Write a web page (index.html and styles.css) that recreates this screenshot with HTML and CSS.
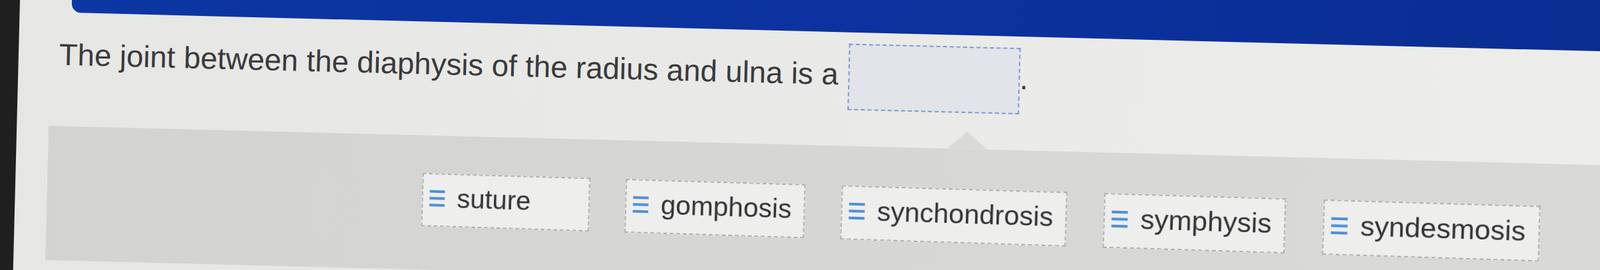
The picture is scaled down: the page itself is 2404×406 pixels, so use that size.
FILE: index.html
```html
<!DOCTYPE html>
<html lang="en">
<head>
    <meta charset="UTF-8">
    <meta name="viewport" content="width=device-width, initial-scale=1.0">
    <title>Drag and Drop Question</title>
    <link rel="stylesheet" href="styles.css">
</head>
<body>
    <div class="screen">
        <div class="topbar"></div>

        <p class="question">The joint between the diaphysis of the radius and ulna is a <span class="drop-zone"></span>.</p>

        <div class="tray">
            <div class="choices">
                <div class="chip">
                    <svg class="grip" viewBox="0 0 24 25"><rect y="0" width="24" height="4"/><rect y="10.5" width="24" height="4"/><rect y="21" width="24" height="4"/></svg>
                    <span>suture</span>
                </div>
                <div class="chip">
                    <svg class="grip" viewBox="0 0 24 25"><rect y="0" width="24" height="4"/><rect y="10.5" width="24" height="4"/><rect y="21" width="24" height="4"/></svg>
                    <span>gomphosis</span>
                </div>
                <div class="chip">
                    <svg class="grip" viewBox="0 0 24 25"><rect y="0" width="24" height="4"/><rect y="10.5" width="24" height="4"/><rect y="21" width="24" height="4"/></svg>
                    <span>synchondrosis</span>
                </div>
                <div class="chip">
                    <svg class="grip" viewBox="0 0 24 25"><rect y="0" width="24" height="4"/><rect y="10.5" width="24" height="4"/><rect y="21" width="24" height="4"/></svg>
                    <span>symphysis</span>
                </div>
                <div class="chip">
                    <svg class="grip" viewBox="0 0 24 25"><rect y="0" width="24" height="4"/><rect y="10.5" width="24" height="4"/><rect y="21" width="24" height="4"/></svg>
                    <span>syndesmosis</span>
                </div>
            </div>
        </div>
    </div>
</body>
</html>
```

FILE: styles.css
```css
html, body {
    margin: 0;
    padding: 0;
    height: 100%;
    overflow: hidden;
    background: #1f1f1f;
}
body {
    font-family: "Liberation Sans", Arial, sans-serif;
}
/* the photo was taken at a slight tilt */
.screen {
    margin: -80px 0 0 30px;
    width: 2900px;
    height: 720px;
    padding-top: 0.1px;
    background: linear-gradient(to right, #e6e6e4, #ebebe9 60%, #eeeeec);
    transform: rotate(1.45deg);
    transform-origin: 0 80px;
}
.topbar {
    margin-left: 78px;
    height: 97px;
    background: linear-gradient(to right, #0c36a3, #0b319d 50%, #0a2b8c);
    border-bottom-left-radius: 14px;
}
.question {
    margin: 17px 0 0 0;
    padding-left: 61px;
    font-size: 45.5px;
    color: #3a3a3c;
}
.drop-zone {
    display: inline-block;
    width: 254px;
    height: 96px;
    margin-left: 2px;
    vertical-align: middle;
    border: 2px dashed #7d9bd3;
    background: #e1e4e8;
}
.tray {
    position: relative;
    margin: 54px 0 0 48px;
    width: 2803px;
    height: 202px;
    background: linear-gradient(to right, #d3d3d1, #d7d7d5 50%, #dadad8);
    display: flex;
    justify-content: center;
    align-items: center;
}
.tray::before {
    content: "";
    position: absolute;
    left: 1350px;
    top: -26px;
    border-left: 30px solid transparent;
    border-right: 30px solid transparent;
    border-bottom: 26px solid #d9d9d7;
}
.choices {
    display: flex;
    align-items: center;
    gap: 55px;
    transform: translateX(-17px) perspective(2000px) rotateY(-3deg) rotate(0.3deg);
}
.chip {
    display: flex;
    align-items: center;
    gap: 19px;
    min-width: 262px;
    height: 82px;
    box-sizing: border-box;
    padding: 0 18px 6px 10px;
    background: #eeeeed;
    border: 2px dashed #b3b3b3;
    font-size: 41.5px;
    color: #333335;
}
.grip {
    width: 24px;
    height: 25px;
    fill: #4d8fd8;
    flex-shrink: 0;
}
```
